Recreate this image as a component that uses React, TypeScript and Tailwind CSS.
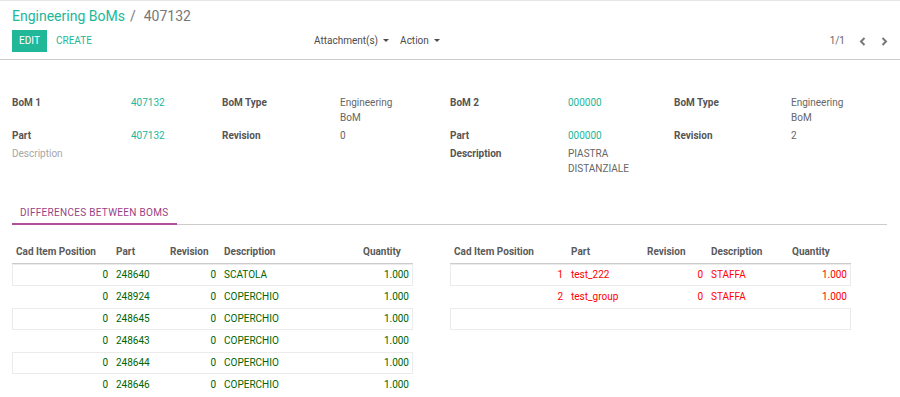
import React from 'react';

function Caret() {
  return (
    <span className="inline-block ml-[5px] w-0 h-0 border-l-[3px] border-r-[3px] border-t-[3px] border-l-transparent border-r-transparent border-t-[#4c4c4c] relative top-[-1px]" />
  );
}

function Chevron({ dir }: { dir: 'l' | 'r' }) {
  return (
    <svg width="8" height="9" viewBox="0 0 8 9" className="block">
      {dir === 'l' ? (
        <polyline points="5.5,1 2,4.5 5.5,8" fill="none" stroke="#777" strokeWidth="2" />
      ) : (
        <polyline points="2.5,1 6,4.5 2.5,8" fill="none" stroke="#777" strokeWidth="2" />
      )}
    </svg>
  );
}

type Cell = { text: string; kind: 'label' | 'link' | 'value' | 'empty' | 'none'; w?: string };

function FieldGrid({ cols, rows }: { cols: string; rows: Cell[][] }) {
  return (
    <div className={`grid ${cols}`}>
      {rows.flat().map((c, i) => {
        let cls = 'pt-[1px] pb-[2px] leading-[15px] ';
        if (c.kind === 'label') cls += 'font-bold text-[#555555]';
        else if (c.kind === 'link') cls += 'text-[#21b799]';
        else if (c.kind === 'value') cls += 'text-[#666666]';
        else if (c.kind === 'empty') cls += 'text-[#a6a6a6]';
        return (
          <div key={i} className={cls}>
            {c.w ? <div className={c.w}>{c.text}</div> : c.text}
          </div>
        );
      })}
    </div>
  );
}

type Row = { pos: string; part: string; rev: string; desc: string; qty: string };

const leftRows: Row[] = [
  { pos: '0', part: '248640', rev: '0', desc: 'SCATOLA', qty: '1.000' },
  { pos: '0', part: '248924', rev: '0', desc: 'COPERCHIO', qty: '1.000' },
  { pos: '0', part: '248645', rev: '0', desc: 'COPERCHIO', qty: '1.000' },
  { pos: '0', part: '248643', rev: '0', desc: 'COPERCHIO', qty: '1.000' },
  { pos: '0', part: '248644', rev: '0', desc: 'COPERCHIO', qty: '1.000' },
  { pos: '0', part: '248646', rev: '0', desc: 'COPERCHIO', qty: '1.000' },
];

const rightRows: (Row | null)[] = [
  { pos: '1', part: 'test_222', rev: '0', desc: 'STAFFA', qty: '1.000' },
  { pos: '2', part: 'test_group', rev: '0', desc: 'STAFFA', qty: '1.000' },
  null,
];

function DiffTable({ cols, rows, color }: { cols: string; rows: (Row | null)[]; color: string }) {
  return (
    <div className="w-[401px]">
      <div className={`grid ${cols} h-[22px] items-center border-b border-[#cccccc] font-bold text-[#5a5a5a]`}>
        <div className="pl-[4px] whitespace-nowrap">Cad Item Position</div>
        <div className="pl-[4px]">Part</div>
        <div className="pl-[4px]">Revision</div>
        <div className="pl-[4px]">Description</div>
        <div className="pl-[4px]">Quantity</div>
      </div>
      {rows.map((r, i) => (
        <div
          key={i}
          className={`grid ${cols} h-[22px] items-center ${color} ${i % 2 === 0 ? 'shadow-[inset_0_0_0_1px_#ebebeb]' : ''}`}
        >
          {r ? (
            <>
              <div className="text-right pr-[4px]">{r.pos}</div>
              <div className="pl-[4px]">{r.part}</div>
              <div className="text-right pr-[4px]">{r.rev}</div>
              <div className="pl-[4px]">{r.desc}</div>
              <div className="text-right pr-[4px]">{r.qty}</div>
            </>
          ) : null}
        </div>
      ))}
    </div>
  );
}

export default function App() {
  return (
    <div className="w-[900px] h-[397px] overflow-hidden bg-white font-['Roboto',sans-serif] text-[10px] leading-[14.3px] text-[#4c4c4c] border-t border-[#e6e6e6]">
      {/* Control panel */}
      <div className="px-3 pt-[5px] pb-[7px] border-b border-[#cccccc]">
        <div className="text-[14px] leading-[20px] flex">
          <span className="text-[#21b799]">Engineering BoMs</span>
          <span className="text-[#777777] ml-[5px]">/</span>
          <span className="text-[#777777] ml-[8px]">407132</span>
        </div>
        <div className="mt-[4px] flex items-center h-[22px]">
          <div className="w-[302px] flex items-center">
            <button className="h-[22px] w-[35px] bg-[#21b799] text-white text-[10px] leading-[22px]">EDIT</button>
            <button className="ml-[9px] text-[#21b799] text-[10px]">CREATE</button>
          </div>
          <div className="flex-1 flex items-center pt-[1px]">
            <span className="flex items-center">Attachment(s)<Caret /></span>
            <span className="ml-[11px] flex items-center">Action<Caret /></span>
          </div>
          <div className="flex items-center text-[#666666] pt-[1px]">
            <span>1/1</span>
            <span className="ml-[14px]"><Chevron dir="l" /></span>
            <span className="ml-[13px]"><Chevron dir="r" /></span>
          </div>
        </div>
      </div>

      {/* Form */}
      <div className="px-3 pt-[34px]">
        <div className="flex">
          <div className="w-[438px]">
            <FieldGrid
              cols="grid-cols-[119px_91px_118px_110px]"
              rows={[
                [
                  { text: 'BoM 1', kind: 'label' },
                  { text: '407132', kind: 'link' },
                  { text: 'BoM Type', kind: 'label' },
                  { text: 'Engineering BoM', kind: 'value', w: 'w-[62px]' },
                ],
                [
                  { text: 'Part', kind: 'label' },
                  { text: '407132', kind: 'link' },
                  { text: 'Revision', kind: 'label' },
                  { text: '0', kind: 'value' },
                ],
                [
                  { text: 'Description', kind: 'empty' },
                  { text: '', kind: 'none' },
                  { text: '', kind: 'none' },
                  { text: '', kind: 'none' },
                ],
              ]}
            />
          </div>
          <div className="w-[438px]">
            <FieldGrid
              cols="grid-cols-[118px_106px_117px_97px]"
              rows={[
                [
                  { text: 'BoM 2', kind: 'label' },
                  { text: '000000', kind: 'link' },
                  { text: 'BoM Type', kind: 'label' },
                  { text: 'Engineering BoM', kind: 'value', w: 'w-[62px]' },
                ],
                [
                  { text: 'Part', kind: 'label' },
                  { text: '000000', kind: 'link' },
                  { text: 'Revision', kind: 'label' },
                  { text: '2', kind: 'value' },
                ],
                [
                  { text: 'Description', kind: 'label' },
                  { text: 'PIASTRA DISTANZIALE', kind: 'value', w: 'w-[75px]' },
                  { text: '', kind: 'none' },
                  { text: '', kind: 'none' },
                ],
              ]}
            />
          </div>
        </div>

        {/* Notebook */}
        <div className="mt-[21px] flex border-b border-[#cccccc] mr-[1px]">
          <div className="pt-[7px] pb-[3px] px-2 border-b-2 border-[#b0509b] -mb-px text-[#9a3f86] leading-[14px] tracking-[0.3px]">
            DIFFERENCES BETWEEN BOMS
          </div>
        </div>

        <div className="mt-[17px] flex">
          <div className="w-[438px]">
            <DiffTable cols="grid-cols-[100px_54px_54px_139px_54px]" rows={leftRows} color="text-[#006400]" />
            <div className="w-[401px] h-px bg-[#e6e6e6] mt-[1px]" />
          </div>
          <div className="w-[438px]">
            <DiffTable cols="grid-cols-[117px_76px_64px_81px_63px]" rows={rightRows} color="text-[#ff0000]" />
          </div>
        </div>
      </div>
    </div>
  );
}
